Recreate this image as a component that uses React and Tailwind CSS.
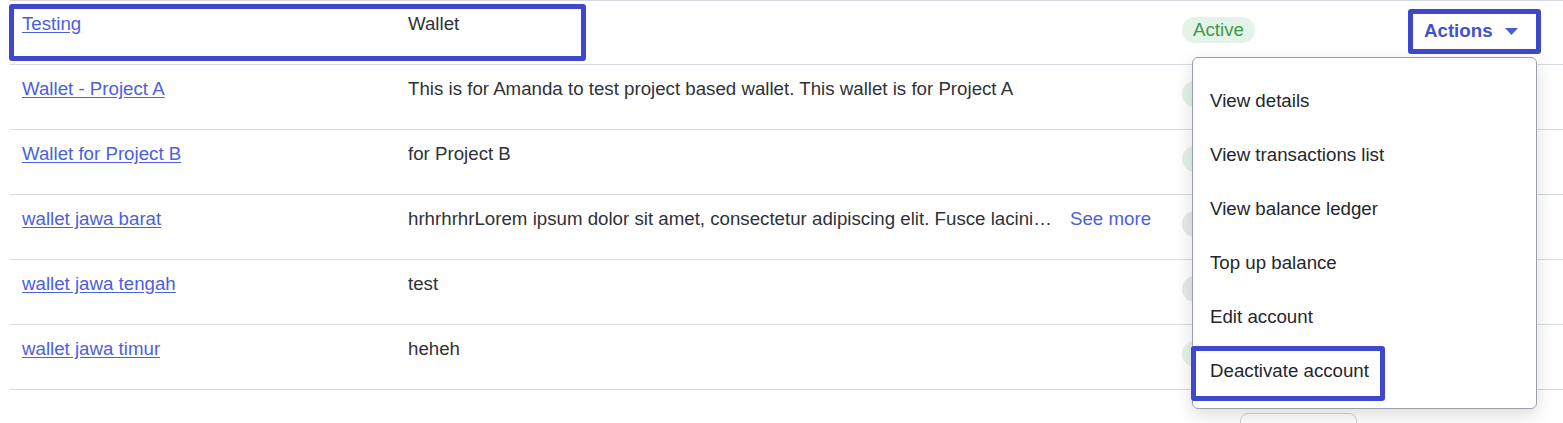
import { useState } from 'react';

const wallets = [
    { name: 'Testing', description: 'Wallet', status: 'Active' },
    { name: 'Wallet - Project A', description: 'This is for Amanda to test project based wallet. This wallet is for Project A', status: 'Active' },
    { name: 'Wallet for Project B', description: 'for Project B', status: 'Active' },
    { name: 'wallet jawa barat', description: 'hrhrhrhrLorem ipsum dolor sit amet, consectetur adipiscing elit. Fusce lacinia odio vitae vestibulum vestibulum.', status: 'Inactive', long: true },
    { name: 'wallet jawa tengah', description: 'test', status: 'Inactive' },
    { name: 'wallet jawa timur', description: 'heheh', status: 'Active' },
];

const menuItems = [
    'View details',
    'View transactions list',
    'View balance ledger',
    'Top up balance',
    'Edit account',
    'Deactivate account',
];

function StatusBadge({ status }) {
    const active = status === 'Active';
    return (
        <span
            className={`inline-flex h-[26px] items-center rounded-full px-[11px] leading-none ${
                active ? 'bg-[#e4f3e7] text-[#3c9a4f]' : 'bg-[#e8eaee] text-[#555b66]'
            }`}
        >
            {status}
        </span>
    );
}

function Highlight({ className }) {
    return <div className={`pointer-events-none absolute rounded-[3px] border-[5px] border-[#3f48cc] ${className}`} />;
}

export default function App() {
    const [open] = useState(true);

    return (
        <div
            className="relative h-[423px] w-[1563px] overflow-hidden bg-white text-[18.7px] text-[#2f3237]"
            style={{ fontFamily: '"Liberation Sans", Arial, sans-serif' }}
        >
            {/* Table */}
            <div className="ml-[10px] border-t border-[#d5d9e0]">
                {wallets.map((w, i) => (
                    <div
                        key={w.name}
                        className={`grid grid-cols-[386px_774px_226px_1fr] border-b border-[#d5d9e0] ${
                            i === 0 ? 'h-[64px]' : 'h-[65px]'
                        }`}
                    >
                        <div className={`px-[12px] leading-[26px] ${i === 0 ? 'pt-[10px]' : 'pt-[11px]'}`}>
                            <a href="#" className="text-[#4b61dc] underline underline-offset-2">
                                {w.name}
                            </a>
                        </div>
                        <div className={`px-[12px] leading-[26px] ${i === 0 ? 'pt-[10px]' : 'pt-[11px]'}`}>
                            {w.long ? (
                                <div className="flex items-center">
                                    <span className="max-w-[650px] truncate">{w.description}</span>
                                    <a href="#" className="ml-[12px] shrink-0 text-[#4b61dc]">
                                        See more
                                    </a>
                                </div>
                            ) : (
                                w.description
                            )}
                        </div>
                        <div className="px-[12px] pt-[15px]">
                            <StatusBadge status={w.status} />
                        </div>
                        <div className="pl-[12px] pt-[8px]">
                            {i === 0 && (
                                <button className="flex h-[45px] w-[133px] items-center rounded-[3px] border-[5px] border-[#3f48cc] pl-[11px] font-bold text-[#3f51d2]">
                                    Actions
                                    <svg width="13" height="7" viewBox="0 0 13 7" className="ml-[12px]">
                                        <path d="M0 0h13L6.5 7z" fill="#4a5bd6" />
                                    </svg>
                                </button>
                            )}
                        </div>
                    </div>
                ))}
            </div>

            {/* Pagination button under the table */}
            <div className="ml-[1240px] mt-[23px] h-[30px] w-[117px] rounded-[8px] border border-[#cfd3da] bg-white" />

            {/* Highlight on first row */}
            <Highlight className="left-[9px] top-[4px] h-[57px] w-[577px]" />

            {/* Actions dropdown */}
            {open && (
                <div className="absolute left-[1192px] top-[57px] h-[352px] w-[345px] rounded-[6px] border border-[#9ba1ab] bg-white pt-[16px] shadow-[0_6px_18px_rgba(0,0,0,0.14)]">
                    {menuItems.map((item) => (
                        <div key={item} className="flex h-[54px] items-center px-[17px] text-[#24272c]">
                            {item}
                        </div>
                    ))}
                </div>
            )}

            {/* Highlight on Deactivate */}
            <Highlight className="left-[1191px] top-[346px] h-[55px] w-[194px]" />
        </div>
    );
}
